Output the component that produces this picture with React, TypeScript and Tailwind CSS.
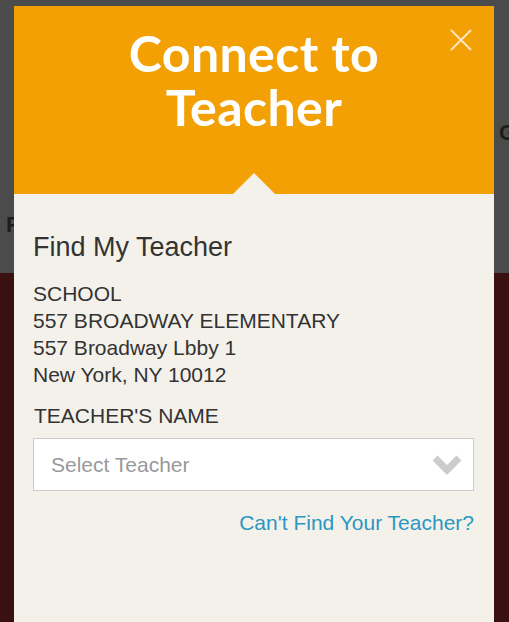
export default function App() {
  return (
    <div className="relative h-[622px] w-[509px] overflow-hidden flex flex-col font-['Liberation_Sans',Arial,sans-serif]">
      <div className="h-[273px] bg-[#4b4b4b] flex flex-col overflow-hidden">
        <div className="pt-[118px] pl-[499px] text-[22px] font-bold leading-[30px] text-[#1c1c1c] whitespace-nowrap">Go</div>
        <div className="pt-[62px] pl-[6px] text-[22px] font-bold leading-[30px] text-[#1c1c1c] whitespace-nowrap">Find</div>
      </div>
      <div className="flex-1 bg-[#3b1010]" />

      <div className="absolute left-[14px] top-[6px] bottom-0 w-[480px] bg-[#f4f1eb] flex flex-col">
        <div className="relative h-[188px] bg-[#f2a004] pt-[20px]">
          <h1 className="text-center text-white font-['Lato',sans-serif] font-bold text-[50px] leading-[54px] tracking-[0.4px]">
            Connect to
            <br />
            Teacher
          </h1>
          <button className="absolute left-[435px] top-[22px] w-[24px] h-[24px] flex items-center justify-center" aria-label="Close">
            <svg width="24" height="24" viewBox="0 0 24 24">
              <path d="M2 2 L22 22 M22 2 L2 22" stroke="#fde6bd" strokeWidth="2" fill="none" />
            </svg>
          </button>
          <div className="absolute left-[219px] bottom-0 w-0 h-0 border-l-[21px] border-r-[21px] border-b-[21px] border-l-transparent border-r-transparent border-b-[#f4f1eb]" />
        </div>

        <div className="pl-[19px] pr-[20px] pt-[38px] text-[#333333]">
          <h2 className="text-[27px] leading-[30px] font-normal">Find My Teacher</h2>
          <div className="mt-[18px] text-[21px] leading-[27px]">
            <div>SCHOOL</div>
            <div>557 BROADWAY ELEMENTARY</div>
            <div>557 Broadway Lbby 1</div>
            <div>New York, NY 10012</div>
          </div>
          <div className="mt-[14px] pl-[1px] text-[21px] leading-[27px]">TEACHER'S NAME</div>
          <div className="mt-[9px] h-[53px] bg-white border border-[#cccccc] flex items-center justify-between pl-[17px] pr-[11px]">
            <span className="text-[21px] text-[#999999]">Select Teacher</span>
            <svg width="30" height="22" viewBox="0 0 30 22">
              <polyline points="3,4 15,16 27,4" stroke="#cccccc" strokeWidth="7" fill="none" />
            </svg>
          </div>
          <div className="mt-[18px] text-right text-[21px] leading-[27px] text-[#2a97c2]">Can't Find Your Teacher?</div>
        </div>
      </div>
    </div>
  );
}
